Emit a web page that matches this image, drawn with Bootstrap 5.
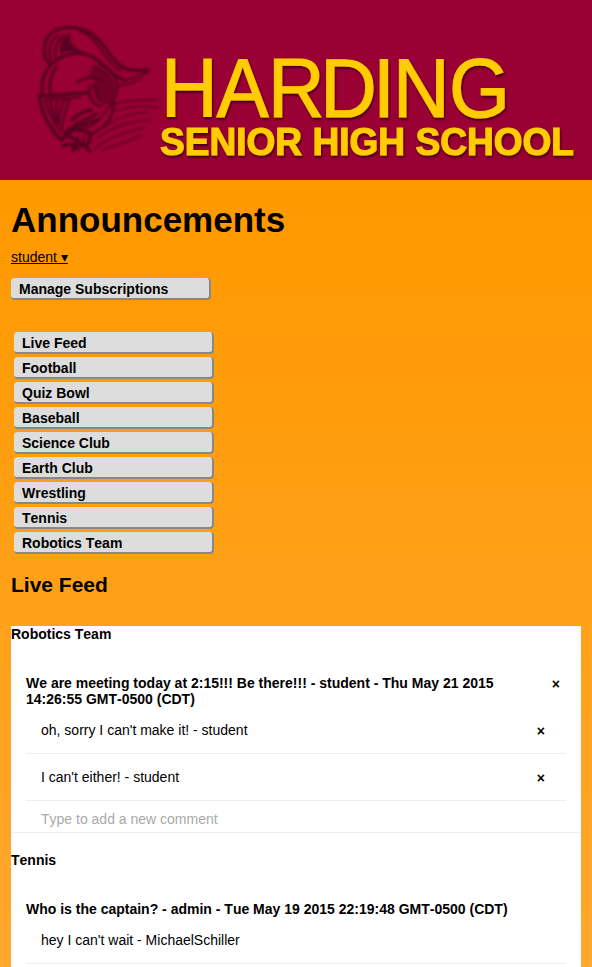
<!DOCTYPE html>
<html lang="en">
<head>
<meta charset="utf-8">
<title>Announcements</title>
<meta name="viewport" content="width=device-width, initial-scale=1">
<link href="https://cdn.jsdelivr.net/npm/bootstrap@5.3.0/dist/css/bootstrap.min.css" rel="stylesheet">
<style>
html{height:967px;overflow:hidden}
body{height:967px;overflow:hidden;font:14px/16px "Liberation Sans",Arial,sans-serif;font-kerning:none;color:#000;background:linear-gradient(#f90 0,#f90 200px,#ffa72e 967px)}
.banner{height:180px;background:#903}
.page-title{font-size:35px;line-height:40px;margin-bottom:9px}
.section-title{font-size:21px;line-height:24px;margin:19px 0 29px}
.page-body{padding:20px 11px 0}
.user-link{color:#000;margin-bottom:13px;height:16px}
.tab-btn{width:200px;height:22px;padding:3px 8px 1px;line-height:16px;font-size:14px;font-weight:700;font-kerning:none;text-align:left;color:#000;background:#ddd;border:0 solid #888;border-width:0 2px 2px 0;border-radius:4px}
.tab-btn:hover{background:#ccc}
.channels{gap:3px;margin:32px 3px 0}
.channel-name{font-size:14px;line-height:16px;margin-bottom:33px}
.channel-feed{border-bottom:1px solid #eee;margin-bottom:19px}
.post{margin:0 15px}
.post-head{padding-right:6px}
.post-text{max-width:490px}
.reply{padding:15px 21px 15px 15px;border-bottom:1px solid #eee}
.close-x{font-weight:700;line-height:16px;padding-top:1px;height:16px}
.new-reply{height:31px;padding:10px 15px 5px;line-height:16px;font-size:14px;font-kerning:none;border:0;border-radius:0;color:#000;background:#fff}
.new-reply::placeholder{color:#a9a9a9;opacity:1}
</style>
<script src="https://cdn.jsdelivr.net/npm/bootstrap@5.3.0/dist/js/bootstrap.bundle.min.js"></script>
</head>
<body>
<header class="banner">
<svg class="d-block" width="592" height="180" viewBox="0 0 592 180" role="img" aria-label="Harding Senior High School">
  <defs>
    <filter id="soft" x="-10%" y="-10%" width="120%" height="120%"><feGaussianBlur stdDeviation="3.2"/></filter>
    <filter id="shade" x="-5%" y="-10%" width="110%" height="130%"><feGaussianBlur in="SourceAlpha" stdDeviation="1.3"/><feOffset dx="1.2" dy="1.6"/><feComponentTransfer result="s"><feFuncA type="linear" slope=".6"/></feComponentTransfer><feMerge><feMergeNode in="s"/><feMergeNode in="SourceGraphic"/></feMerge></filter>
  </defs>
  <g transform="translate(30 20) scale(.3333)" filter="url(#soft)" fill="none" stroke="#560020" stroke-width="9" stroke-linecap="round" stroke-linejoin="round">
    <!-- plume -->
    <path d="M60 132C42 118 38 90 48 62C58 36 85 22 125 23C165 24 192 42 216 72C238 98 256 134 290 148C312 154 334 150 356 150" stroke-width="10"/>
    <path d="M62 120C54 92 58 62 82 48M76 112C72 88 80 64 102 44M94 98C92 76 98 60 118 44" stroke-width="7"/>
    <path d="M92 96C92 74 98 56 120 46C112 66 128 82 154 96C130 88 112 88 92 96Z" fill="#560020" stroke-width="5"/>
    <path d="M72 126C96 106 132 96 164 102C190 108 206 122 222 136C244 158 262 174 284 182" stroke-width="10"/>
    <path d="M148 34C178 40 194 64 210 86C228 110 246 140 274 154M276 180C304 180 330 166 352 156M268 196C294 196 312 188 334 174" stroke-width="6"/>
    <!-- helmet -->
    <path d="M66 130C44 152 34 182 36 218M82 138C62 160 58 190 60 218" stroke-width="9"/>
    <path d="M27 227C70 230 122 218 176 220M27 228C34 268 48 304 70 332C80 346 88 356 96 360" stroke-width="11"/>
    <path d="M44 240L150 232M46 242C54 274 72 310 96 338" stroke-width="6"/>
    <path d="M62 240C62 264 72 292 82 308M82 240C78 262 78 280 82 296M102 238C92 264 86 290 86 312M118 238C108 264 98 300 96 326" stroke-width="7"/>
    <path d="M98 358C116 334 152 316 206 298M106 336C130 314 170 298 200 282M126 300C144 282 166 272 184 270" stroke-width="10"/>
    <path d="M142 186C162 170 192 170 218 182M178 196C174 226 186 256 214 258M190 196C200 212 198 232 208 240" stroke-width="8"/>
    <path d="M190 136C224 148 252 172 260 208C264 236 248 256 218 252C200 240 204 214 190 190C206 184 204 168 176 168" fill="#560020" fill-opacity=".6" stroke-width="3" stroke-opacity=".5"/>
    <path d="M190 138L236 168M206 132C238 148 260 174 266 204M262 206C260 230 250 248 236 262C218 290 196 318 160 328" stroke-width="6"/>
    <!-- collar and cape -->
    <path d="M106 342C124 328 146 328 164 334C186 340 186 358 170 374C154 380 140 370 142 354M118 350L140 362M146 388C134 376 120 366 100 378M166 376L180 394M136 372L128 392" stroke-width="11"/>
    <path d="M160 350C166 362 160 372 150 376M180 344C204 334 226 318 240 296C248 280 248 264 254 250" stroke-width="8"/>
    <path d="M250 252C282 244 318 238 384 240M248 276C286 262 332 256 384 262M222 322C256 294 300 280 352 276M204 354C250 316 300 306 356 300M196 386C234 352 278 340 340 322M220 390C262 370 302 366 330 346" stroke-width="8" opacity=".55"/>
  </g>
  <g filter="url(#shade)" fill="#fc0f" stroke="#fc0f" font-family="Liberation Sans, Arial, sans-serif">
    <text transform="scale(.95 1)" x="169.5 228 282 337 392.6 413.7 472.6" y="117.3" font-size="82.5" stroke-width="1.1">HARDING</text>
    <text x="160" y="155.3" font-size="39" font-weight="700" stroke-width="1.2" textLength="414" lengthAdjust="spacingAndGlyphs">SENIOR HIGH SCHOOL</text>
  </g>
</svg>
</header>
<main class="page-body">
  <h1 class="page-title fw-bold">Announcements</h1>
  <div class="user-link"><a class="text-reset text-decoration-underline" href="#">student ▾</a></div>
  <button class="tab-btn d-block" type="button">Manage Subscriptions</button>
  <nav class="channels d-flex flex-column" aria-label="Channels">
    <button class="tab-btn" type="button">Live Feed</button>
    <button class="tab-btn" type="button">Football</button>
    <button class="tab-btn" type="button">Quiz Bowl</button>
    <button class="tab-btn" type="button">Baseball</button>
    <button class="tab-btn" type="button">Science Club</button>
    <button class="tab-btn" type="button">Earth Club</button>
    <button class="tab-btn" type="button">Wrestling</button>
    <button class="tab-btn" type="button">Tennis</button>
    <button class="tab-btn" type="button">Robotics Team</button>
  </nav>
  <h2 class="section-title fw-bold">Live Feed</h2>
  <div class="bg-white">
    <section class="channel-feed">
      <h3 class="channel-name fw-bold">Robotics Team</h3>
      <article class="post">
        <div class="post-head d-flex justify-content-between fw-bold"><div class="post-text">We are meeting today at 2:15!!! Be there!!! - student - Thu May 21 2015 14:26:55 GMT-0500 (CDT)</div><span class="close-x">×</span></div>
        <div class="reply d-flex justify-content-between"><span>oh, sorry I can't make it! - student</span><span class="close-x">×</span></div>
        <div class="reply d-flex justify-content-between"><span>I can't either! - student</span><span class="close-x">×</span></div>
        <input class="new-reply d-block w-100" type="text" placeholder="Type to add a new comment">
      </article>
    </section>
    <section class="channel-feed">
      <h3 class="channel-name fw-bold">Tennis</h3>
      <article class="post">
        <div class="post-head fw-bold">Who is the captain? - admin - Tue May 19 2015 22:19:48 GMT-0500 (CDT)</div>
        <div class="reply">hey I can't wait - MichaelSchiller</div>
        <input class="new-reply d-block w-100" type="text" placeholder="Type to add a new comment">
      </article>
    </section>
  </div>
</main>
</body>
</html>
